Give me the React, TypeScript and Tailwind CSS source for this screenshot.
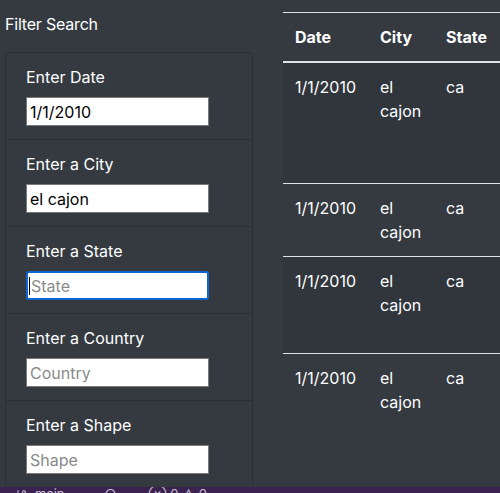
import { GitBranch } from "lucide-react";

const filters = [
  { label: "Enter Date", placeholder: "Date", value: "1/1/2010" },
  { label: "Enter a City", placeholder: "City", value: "el cajon" },
  { label: "Enter a State", placeholder: "State", value: "", focused: true },
  { label: "Enter a Country", placeholder: "Country", value: "" },
  { label: "Enter a Shape", placeholder: "Shape", value: "" },
];

const rows = [
  { h: "h-[121px]", striped: true },
  { h: "h-[72px]", striped: false },
  { h: "h-[97px]", striped: true },
  { h: "h-[140px]", striped: false },
];

export default function App() {
  return (
    <div className="w-[500px] h-[493px] overflow-hidden bg-[#343a40] text-white font-['Inter',sans-serif] flex flex-col">
      <div className="h-[487px] flex overflow-hidden">
        {/* filters */}
        <div className="w-[248px] ml-[5px] shrink-0 flex flex-col">
          <h2 className="text-base leading-6 pt-[12px] pb-[16px] tracking-[-0.2px]">Filter Search</h2>
          <ul className="border border-[#2b3035] rounded-t-[4px] flex flex-col">
            {filters.map((f, i) => (
              <li
                key={f.label}
                className={`px-5 pt-3 pb-3 ${i > 0 ? "h-[87px] border-t border-[#2b3035]" : "h-[86px]"}`}
              >
                <label className="block text-base leading-6 mb-2">{f.label}</label>
                <div className="relative w-[183px]">
                  <input
                    type="text"
                    defaultValue={f.value}
                    placeholder={f.placeholder}
                    className={`w-[183px] h-[29px] bg-white text-black text-base px-[3px] placeholder:text-[#8a8a8a] outline-none ${
                      f.focused
                        ? "border-2 border-[#0f66d0] rounded-[3px]"
                        : "border border-[#7a7a7a]"
                    }`}
                  />
                  {f.focused && (
                    <span className="absolute left-[3px] top-[6px] w-px h-[18px] bg-black" />
                  )}
                </div>
              </li>
            ))}
          </ul>
        </div>

        {/* results table */}
        <div className="ml-[30px] flex-1 overflow-hidden pt-[12px]">
          <table className="w-[217px] table-fixed border-collapse text-base leading-6">
            <thead>
              <tr className="border-t border-[#dee2e6] border-b-2 border-b-[#dee2e6]">
                <th className="w-[85px] text-left font-bold px-3 pt-3 pb-3">Date</th>
                <th className="w-[66px] text-left font-bold px-3 pt-3 pb-3">City</th>
                <th className="text-left font-bold px-3 pt-3 pb-3">State</th>
              </tr>
            </thead>
            <tbody>
              {rows.map((r, i) => (
                <tr
                  key={i}
                  className={`${r.h} ${i > 0 ? "border-t border-[#dee2e6]" : ""} ${
                    r.striped ? "bg-[#30363c]" : ""
                  }`}
                >
                  <td className="align-top px-3 py-3">1/1/2010</td>
                  <td className="align-top px-3 py-3">el cajon</td>
                  <td className="align-top px-3 py-3">ca</td>
                </tr>
              ))}
            </tbody>
          </table>
        </div>
      </div>

      {/* editor status bar, mostly cut off */}
      <div className="h-[6px] bg-[#3c2250] overflow-hidden flex items-start gap-4 pl-[15px] text-[13px] leading-[13px] text-[#c9c0d0]">
        <span className="flex items-center gap-2 mt-[1px]">
          <GitBranch size={12} strokeWidth={2} />
          main
        </span>
        <span className="mt-[1px] ml-6">○</span>
        <span className="mt-[1px] ml-4">⊗ 0 △ 0</span>
      </div>
    </div>
  );
}
